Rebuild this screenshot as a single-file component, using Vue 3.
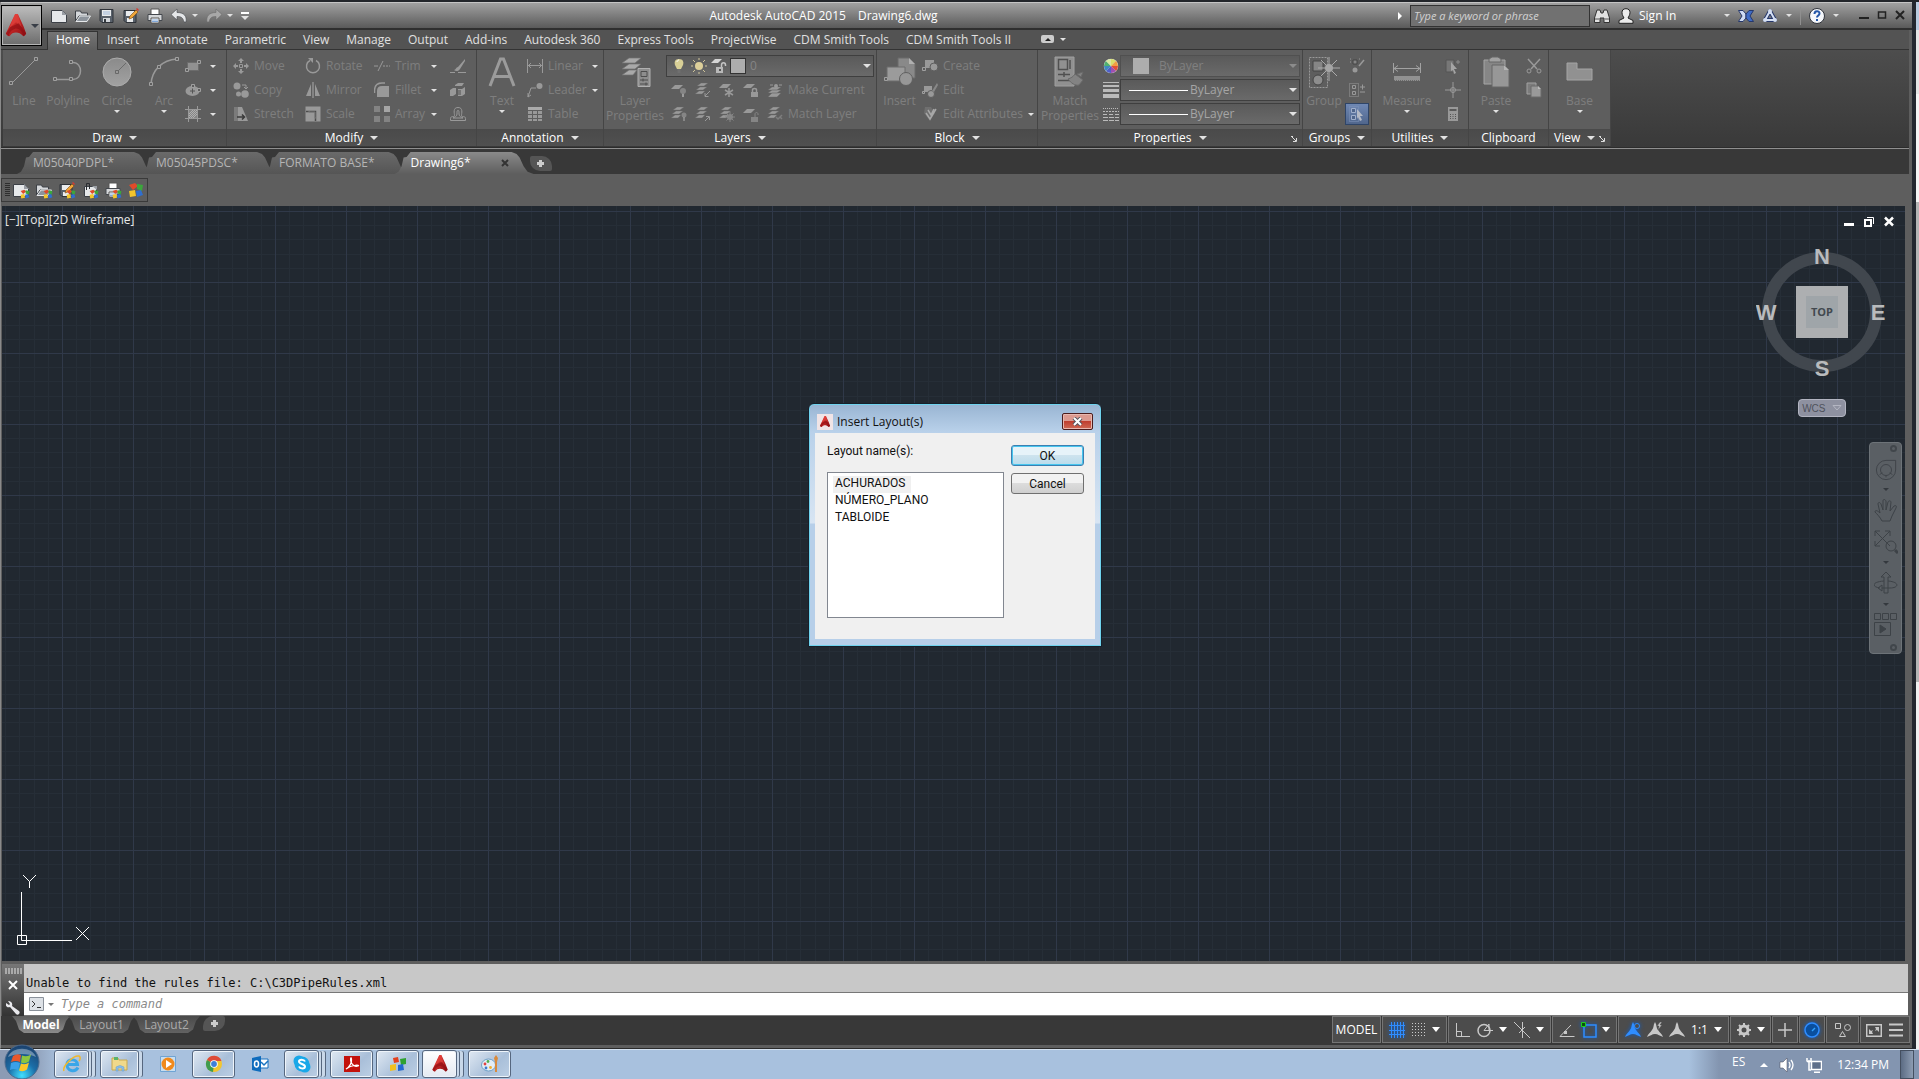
<template>
  <div class="desktop">
    <!-- icon sprite -->
    <svg class="sprite" aria-hidden="true">
      <defs>
        <linearGradient id="g-grey" x1="0" y1="0" x2="0" y2="1">
          <stop offset="0" stop-color="#8a8a8a" />
          <stop offset="1" stop-color="#a2a2a2" />
        </linearGradient>
        <linearGradient id="g-red" x1="0" y1="0" x2="1" y2="1">
          <stop offset="0" stop-color="#ef3b36" />
          <stop offset="1" stop-color="#8e0f14" />
        </linearGradient>
        <radialGradient id="g-orb" cx="0.5" cy="0.9" r="0.9">
          <stop offset="0" stop-color="#3fe0ff" />
          <stop offset="0.45" stop-color="#1b6ea8" />
          <stop offset="1" stop-color="#1b3f6b" />
        </radialGradient>
      </defs>

      <symbol id="i-acad" viewBox="0 0 24 26">
        <path d="M11 0h3l6 13 3 8c-1 2-2 3-3 3-3-3-5-4-8-4s-5 1-7 4c-2 0-3-1-4-3z" fill="url(#g-red)" />
        <path d="M11 0 5 15l7-6 6 5-4-14z" fill="#f0524a" opacity="0.45" />
        <path d="M1 21 6 14l9-4 8 11-3 3c-1-6-6-9-9-8s-6 3-7 8z" fill="#8c0d12" opacity="0.6" />
      </symbol>
      <symbol id="i-new" viewBox="0 0 16 16">
        <path d="M.5 2.500h11l4 4v8H.5z" fill="#e6e8ea" stroke="#3c4046" />
        <path d="M11 2v5h5z" fill="#9a9ea4" />
      </symbol>
      <symbol id="i-open" viewBox="0 0 16 16">
        <path d="M.5 13V3h5l1 2h6v3H4z" fill="#d4d7da" stroke="#3c4046" />
        <path d="M1 13.500 5 8h10.500L12 13.500z" fill="#8d949c" stroke="#e6e8ea" />
      </symbol>
      <symbol id="i-save" viewBox="0 0 16 16">
        <path d="M1 1.500h13v13H3l-2-2z" fill="#59616b" stroke="#2e3238" />
        <path d="M3 2h9v6H3z" fill="#e9ebed" />
        <path d="M4 4h7M4 6h7" stroke="#9fb7d6" />
        <path d="M4 10h7v4H4z" fill="#d3d6da" />
        <path d="M5 11h2v3H5z" fill="#33383e" />
      </symbol>
      <symbol id="i-saveas" viewBox="0 0 16 16">
        <path d="M1 2.500h12v12H3l-2-2z" fill="#59616b" stroke="#2e3238" />
        <path d="M3 3h8v5H3zM4 10h6v4H4z" fill="#e9ebed" />
        <path d="m6 11 1-3 6-6 2 2-6 6z" fill="#f0a63a" stroke="#7c4a12" stroke-width="0.600" />
        <path d="m13 1 2 2 1-1-2-2z" fill="#d9382e" />
      </symbol>
      <symbol id="i-print" viewBox="0 0 16 16">
        <path d="M4 1h8v6H4z" fill="#fff" stroke="#555" />
        <path d="M1 6.500h14v6H1z" fill="#d5d7d9" stroke="#44484e" />
        <path d="M4 10h8v5H4z" fill="#fff" stroke="#555" />
        <path d="M5 12h6M5 13.500h6" stroke="#7fa6d8" />
      </symbol>
      <symbol id="i-pin" viewBox="0 0 16 16">
        <path d="M2.500 4.500h12v10h-12z" fill="#e6e8ea" stroke="#3c4046" />
        <path d="M10 4h5v4z" fill="#9a9ea4" />
        <path d="M4.500 8V1.500h3V7" fill="none" stroke="#2a2d31" />
      </symbol>
      <symbol id="i-undo" viewBox="0 0 16 16">
        <path d="M6 1 0 6.500 6 12V8.500c4 0 6 1 7 5.500h2c1-6-2-9.500-9-9.500z" fill="#e4e6e8" stroke="#44484e" stroke-width="0.600" />
      </symbol>
      <symbol id="i-redo" viewBox="0 0 16 16">
        <path d="m10 1 6 5.500-6 5.500V8.500c-4 0-6 1-7 5.500H1C0 8 3 4.500 10 4.500z" fill="#a8a8a8" stroke="#6d6d6d" stroke-width="0.600" />
      </symbol>
      <symbol id="i-binoc" viewBox="0 0 16 16">
        <path d="M3 2h3l1 3h2l1-3h3l2.500 8v4.500H10V10H6v4.500H.5V10z" fill="#e1e1e1" stroke="#333" />
        <path d="M1 11h4M11 11h4" stroke="#555" />
      </symbol>
      <symbol id="i-user" viewBox="0 0 16 16">
        <path d="M8 .7c3 0 4 2 4 4S10.500 9 10 10l5 2.500v2.800H1v-2.800L6 10C5.500 9 4 7 4 4.700s1-4 4-4z" fill="#ececec" stroke="#222" />
      </symbol>
      <symbol id="i-exchange" viewBox="0 0 16 16">
        <path d="M.5 2.500H5L8 6v4l-3 3.500H.5L4 8z" fill="#cfdcf4" stroke="#26386b" />
        <path d="M15.500 2.500H11L8 6v4l3 3.500h4.500L12 8z" fill="#3f6bc4" stroke="#26386b" />
      </symbol>
      <symbol id="i-a360" viewBox="0 0 16 16">
        <path d="M8 3 3 12h10z" fill="none" stroke="#26386b" stroke-width="4" stroke-linejoin="round" />
        <path d="M8 3 3 12h10z" fill="none" stroke="#d5dff3" stroke-width="2" stroke-linejoin="round" />
        <circle cx="8" cy="3" r="2" fill="#d5dff3" /><circle cx="3" cy="12" r="2" fill="#d5dff3" />
        <circle cx="13" cy="12" r="2" fill="#d5dff3" />
      </symbol>
      <symbol id="i-help" viewBox="0 0 16 16">
        <circle cx="8" cy="8" r="7.500" fill="#f4f6fa" stroke="#30343c" />
        <path d="M5.500 6c0-3.500 5-3.500 5-.5C10.500 7.500 8 7.500 8 9.500M8 11v2" fill="none" stroke="#2456a8" stroke-width="2" />
      </symbol>

      <symbol id="i-line" viewBox="0 0 32 32">
        <path d="M4 27 27 4" stroke="#999" fill="none" />
        <path d="M1.500 25.500h3v3h-3zM26.500 1.500h3v3h-3z" fill="#5e5e5e" stroke="#a0a0a0" />
      </symbol>
      <symbol id="i-polyline" viewBox="0 0 32 32">
        <path d="M3 23.500h18c10 0 10-17 0-17" stroke="#999" fill="none" stroke-width="1.500" />
        <path d="M1.500 21.500h3v3h-3zM17.500 21.500h3v3h-3zM17.500 4.500h3v3h-3z" fill="#5e5e5e" stroke="#a0a0a0" />
      </symbol>
      <symbol id="i-circle" viewBox="0 0 32 32">
        <circle cx="16" cy="16" r="14" fill="url(#g-grey)" stroke="#acacac" />
        <path d="m16 16 9-9" stroke="#6a6a6a" /><path d="M14.500 14.500h3v3h-3z" fill="#999" stroke="#686868" />
      </symbol>
      <symbol id="i-arc" viewBox="0 0 32 32">
        <path d="M3 28C4 14 14 4 29 3" stroke="#999" fill="none" stroke-width="1.500" />
        <path d="M1.500 26.500h3v3h-3zM9.500 9.500h3v3h-3zM27.500 1.500h3v3h-3z" fill="#5e5e5e" stroke="#a0a0a0" />
      </symbol>
      <symbol id="i-rect" viewBox="0 0 16 16">
        <path d="M2.500 4.500h11v8h-11z" fill="#919191" stroke="#6c6c6c" />
        <path d="M.5 10.500h3v3h-3zM12.500 2.500h3v3h-3z" fill="#5e5e5e" stroke="#a0a0a0" />
      </symbol>
      <symbol id="i-ellipse" viewBox="0 0 16 16">
        <ellipse cx="7.500" cy="9" rx="7" ry="5" fill="#999" /><path d="M5 9h5M7.500 6.500v5" stroke="#555" />
        <path d="M6.500 2.500h3v3h-3zM12.500 6.500h3v3h-3z" fill="#5e5e5e" stroke="#a0a0a0" />
      </symbol>
      <symbol id="i-hatch" viewBox="0 0 16 16">
        <path d="M4 4h8v8H4z" fill="#858585" />
        <path d="M3.500 0v16M12.500 0v16M0 3.500h16M0 12.500h16" stroke="#9a9a9a" />
        <path d="m4 8 4-4M4 12l8-8M8 12l4-4M4 10l6-6M6 12l6-6" stroke="#b0b0b0" />
      </symbol>
      <symbol id="i-move" viewBox="0 0 16 16">
        <path d="M8 0 5 3h2v2h2V3h2zM8 16l-3-3h2v-2h2v2h2zM0 8l3-3v2h2v2H3v2zM16 8l-3-3v2h-2v2h2v2z" />
        <path d="M6.500 6.500h3v3h-3z" fill="none" stroke="currentColor" />
      </symbol>
      <symbol id="i-copy" viewBox="0 0 16 16">
        <circle cx="4" cy="4" r="3.500" /><circle cx="5.500" cy="12" r="2.500" /><circle cx="12" cy="12" r="3.800" />
        <path d="M9 3h4v3M11 5l2 2 2-2" fill="none" stroke="currentColor" />
      </symbol>
      <symbol id="i-stretch" viewBox="0 0 16 16">
        <path d="M1 1h8l6 14H1z" /><path d="M1 1h4v14H1z" fill="#7b7b7b" />
        <path d="M4 11h7M9 8.500l2.500 2.500L9 13.500" fill="none" stroke="#3b3b3b" stroke-width="1.500" />
      </symbol>
      <symbol id="i-rotate" viewBox="0 0 16 16">
        <path d="M5 2.500a6.500 6.500 0 1 0 6 0" fill="none" stroke="currentColor" stroke-width="1.500" /><path d="M3 0h5v5z" />
      </symbol>
      <symbol id="i-mirror" viewBox="0 0 16 16">
        <path d="M6 2v12H1zM10 2v12h5z" /><path d="M8 0v16" stroke="#aaa" />
      </symbol>
      <symbol id="i-scale" viewBox="0 0 16 16">
        <path d="M.5.5h15v15H.5z" /><path d="M1 5.500h9.500V15" fill="none" stroke="#4c4c4c" stroke-width="1.500" />
        <path d="M4 5v1h6v6h1" fill="none" stroke="#777" />
      </symbol>
      <symbol id="i-trim" viewBox="0 0 16 16">
        <path d="M0 8h4M4 13l5-10M9 8h2M12 8h2M15 8h1" stroke="currentColor" fill="none" />
      </symbol>
      <symbol id="i-fillet" viewBox="0 0 16 16">
        <path d="M3 15V9q0-5 5-5h7v11z" /><path d="M.5 11V8Q1 1 8 1h3" fill="none" stroke="currentColor" stroke-width="1.500" />
      </symbol>
      <symbol id="i-array" viewBox="0 0 16 16">
        <path d="M0 0h6v6H0zM0 10h6v6H0zM10 10h6v6h-6z" fill="#838383" /><path d="M10 0h6v6h-6z" fill="#a5a5a5" />
      </symbol>
      <symbol id="i-erase" viewBox="0 0 16 16">
        <path d="M15 1 8 9l2 2 5-8zM8 9c-2 0-2 3-4 3 2 2 5 1 6-1z" /><path d="M0 14.500h5M8 14.500h8" stroke="currentColor" />
      </symbol>
      <symbol id="i-explode" viewBox="0 0 16 16">
        <path d="m5 3 3-2h6l-2 3H5zM0 8l3-2h3v6l-3 2H0zM8 7h4l3-2v7l-3 2H8z" /><path d="M8 8h3v5H8z" fill="#747474" />
      </symbol>
      <symbol id="i-offset" viewBox="0 0 16 16">
        <path d="M.5 14.500h15v-2c0-3-4-1-4-3s2-8-3.500-8-3.500 6-3.500 8-4 0-4 3z" fill="none" stroke="currentColor" />
        <path d="M3 12h10c-1-1-4-1-4-4s0-3.500-1-3.500S7 5 7 8s-3 3-4 4z" fill="none" stroke="currentColor" />
      </symbol>
      <symbol id="i-text" viewBox="0 0 32 32">
        <path d="M4 30 14.500 3h3L28 30M8.500 20.500h15" fill="none" stroke="#9b9b9b" stroke-width="3" />
      </symbol>
      <symbol id="i-linear" viewBox="0 0 16 16">
        <path d="M.5 1v14M15.500 1v14M1 7.500h14M4 5 1.500 7.500 4 10M12 5l2.500 2.500L12 10" fill="none" stroke="currentColor" />
      </symbol>
      <symbol id="i-leader" viewBox="0 0 16 16">
        <path d="M1 15 4 6h5M1 11v4l3-2" fill="none" stroke="currentColor" /><circle cx="12.500" cy="4" r="3" />
      </symbol>
      <symbol id="i-table" viewBox="0 0 16 16">
        <path d="M1 1h14v3H1z" fill="#aaa" /><path d="M1 5h4v3H1zM6 5h4v3H6zM11 5h4v3h-4zM1 9h4v3H1zM6 9h4v3H6zM11 9h4v3h-4zM1 13h4v2H1zM6 13h4v2H6zM11 13h4v2h-4z" />
      </symbol>
      <symbol id="i-layerprops" viewBox="0 0 32 32">
        <path d="M10 2h12l-6 5H3zM10 8h12l-6 5H3zM10 14h8l-4 5H3z" fill="#a9a9a9" stroke="#707070" stroke-width="0.700" />
        <path d="M19 12.500h12v18H19z" fill="#8d8d8d" stroke="#b0b0b0" />
        <path d="M22 15.500h6v5h-6zM21 24h8M21 28h8M24 22.500v3M27 26.500v3" fill="none" stroke="#4d4d4d" />
      </symbol>
      <symbol id="i-bulb" viewBox="0 0 16 16">
        <path d="M8 1c4 0 5 3 4 6l-2 4H6L4 7C3 4 4 1 8 1z" fill="#d8cf96" /><path d="M6.500 11h3v4h-3z" fill="#6f6f6f" />
        <path d="M6 4c0-1 1-2 2-2" stroke="#fff" fill="none" />
      </symbol>
      <symbol id="i-sun" viewBox="0 0 16 16">
        <circle cx="8" cy="8" r="4" fill="#ddcf9a" />
        <path d="M8 0v2M8 14v2M0 8h2M14 8h2M2 2l2 2M12 12l2 2M14 2l-2 2M4 12l-2 2" stroke="#cfc49a" />
      </symbol>
      <symbol id="i-layunlock" viewBox="0 0 16 16">
        <path d="M4 1h7L7 5H0z" fill="#d5d5d5" /><path d="M5 9h7v6H5z" fill="#b9b9b9" />
        <path d="M10.500 9V7c0-3 4-3 4 0v1" fill="none" stroke="#c5c5c5" stroke-width="1.500" /><path d="M8 11h2v2H8z" fill="#555" />
      </symbol>
      <symbol id="i-lay1" viewBox="0 0 16 16">
        <path d="M4 3h8L8 7H0z" /><path d="M12 11v4" stroke="#b0b0b0" stroke-width="1.500" /><circle cx="12" cy="9" r="3" fill="#858585" />
      </symbol>
      <symbol id="i-lays" viewBox="0 0 16 16">
        <path d="M6 1h7L9 4H2zM5 5h7L8 8H1zM4 9h6l-3 3H0z" stroke="#666" stroke-width="0.400" />
      </symbol>
      <symbol id="i-lay2" viewBox="0 0 16 16">
        <use href="#i-lays" /><path d="m15 9-5 5M10 11v3.500h3.500" fill="none" stroke="currentColor" />
      </symbol>
      <symbol id="i-lay3" viewBox="0 0 16 16">
        <path d="M4 2h8L8 6H0z" /><path d="M10 6v9M6 8l8 5M14 8l-8 5" stroke="currentColor" stroke-width="1.500" />
      </symbol>
      <symbol id="i-lay4" viewBox="0 0 16 16">
        <path d="M4 2h8L8 6H0z" /><path d="M8 10h7v5H8z" /><path d="M9.500 10V8c0-2 4-2 4 0v2" fill="none" stroke="currentColor" stroke-width="1.500" />
      </symbol>
      <symbol id="i-lay5" viewBox="0 0 16 16">
        <path d="M5 5h9l-4 3H1zM5 8h9l-4 3H1zM5 11h9l-4 4H1z" stroke="#666" stroke-width="0.400" /><circle cx="9" cy="4" r="2" /><path d="M3 3h3M12 3h3" stroke="currentColor" />
      </symbol>
      <symbol id="i-lay6" viewBox="0 0 16 16">
        <use href="#i-lays" /><circle cx="13" cy="9" r="2.500" fill="#858585" /><path d="M13 11v4" stroke="#b0b0b0" />
      </symbol>
      <symbol id="i-lay7" viewBox="0 0 16 16">
        <use href="#i-lays" /><path d="m10 15 4-4M11 10.500h3.500V14" fill="none" stroke="currentColor" />
      </symbol>
      <symbol id="i-lay8" viewBox="0 0 16 16">
        <use href="#i-lays" /><circle cx="11" cy="11" r="3" fill="#858585" />
        <path d="M11 6v10M6 11h10M7.500 7.500l7 7M14.500 7.500l-7 7" stroke="#858585" />
      </symbol>
      <symbol id="i-lay9" viewBox="0 0 16 16">
        <path d="M4 3h8L8 7H0z" /><path d="M8 11h7v5H8z" fill="#858585" /><path d="M12 11V8c0-2 3-2 3 0v1" fill="none" stroke="#858585" />
      </symbol>
      <symbol id="i-lay10" viewBox="0 0 16 16">
        <use href="#i-lays" /><path d="m9 11 2 2 4-4M13 11l2 2" fill="none" stroke="#7d7d7d" stroke-width="1.500" />
      </symbol>
      <symbol id="i-insert" viewBox="0 0 32 32">
        <path d="M14 2h11l6 6v14H14z" fill="#898989" stroke="#6a6a6a" /><path d="M25 2v6h6z" fill="#b0b0b0" />
        <path d="M3 11h18v14H3z" fill="#9b9b9b" stroke="#6c6c6c" /><circle cx="22" cy="23" r="6.500" fill="#979797" stroke="#606060" />
        <path d="M.5 21.500h3v3h-3z" fill="#5e5e5e" stroke="#a0a0a0" />
      </symbol>
      <symbol id="i-bcreate" viewBox="0 0 16 16">
        <path d="M3 2h9v8H3z" /><circle cx="12" cy="9" r="4" stroke="#5e5e5e" /><path d="M.5 9.500h3v3h-3z" fill="#5e5e5e" stroke="#a0a0a0" />
      </symbol>
      <symbol id="i-bedit" viewBox="0 0 16 16">
        <path d="M2 4h8v6H2z" /><circle cx="9" cy="12" r="3.500" stroke="#5e5e5e" /><path d="m10 9 5-8 1 2-4 7z" fill="#888" />
        <path d="M.5 9.500h2v2h-2z" fill="#5e5e5e" stroke="#a0a0a0" />
      </symbol>
      <symbol id="i-battr" viewBox="0 0 16 16">
        <path d="M3 1h6l4 6-5 8-6-8z" fill="#6f6f6f" /><path d="m4 7 4 6 6-10M6 4l3 5 3-6" fill="none" stroke="#a7a7a7" stroke-width="1.500" />
      </symbol>
      <symbol id="i-match" viewBox="0 0 32 32">
        <path d="M1 1h19v29H1z" fill="#909090" stroke="#9f9f9f" /><path d="M4.500 3.500h9v10h-9zM16 4v9M4 18.500h12M4 24.500h12M10 16v5" fill="none" stroke="#505050" stroke-width="1.500" />
        <path d="M14 23c3 4 7 7 11 6l4-5-8-6c-2 3-4 4-7 5zM23 18l6-2-2 5z" fill="#838383" stroke="#6a6a6a" />
      </symbol>
      <symbol id="i-wheel" viewBox="0 0 16 16">
        <circle cx="8" cy="8" r="7.700" fill="#ddd" stroke="#333" stroke-width="0.600" />
        <path d="M8 8V1a7 7 0 0 1 5 2z" fill="#d8e06a" /><path d="m8 8 5-5a7 7 0 0 1 2 5z" fill="#f0a040" /><path d="M8 8h7a7 7 0 0 1-2 5z" fill="#e05038" />
        <path d="m8 8 5 5a7 7 0 0 1-5 2z" fill="#a050b0" /><path d="M8 8v7a7 7 0 0 1-5-2z" fill="#5060c8" /><path d="m8 8-5 5a7 7 0 0 1-2-5z" fill="#4088c0" />
        <path d="M8 8H1a7 7 0 0 1 2-5z" fill="#50b070" /><path d="M8 8 3 3a7 7 0 0 1 5-2z" fill="#d8e8a0" />
      </symbol>
      <symbol id="i-weight" viewBox="0 0 16 16"><path d="M0 0h16v1H0zM0 3h16v2H0zM0 7h16v3H0zM0 12h16v4H0z" fill="#bababa" /></symbol>
      <symbol id="i-ltype" viewBox="0 0 16 16">
        <path d="M0 2.500h16" stroke="#bababa" stroke-dasharray="1 1" /><path d="M0 5.500h16" stroke="#bababa" stroke-dasharray="2 1" />
        <path d="M0 8.500h16" stroke="#bababa" stroke-dasharray="4 2" /><path d="M0 11.500h16M0 14.500h16" stroke="#bababa" stroke-dasharray="5 1" />
      </symbol>
      <symbol id="i-group" viewBox="0 0 32 32">
        <path d="M1.500 1.500h18v30h-18z" fill="none" stroke="#999" stroke-dasharray="2 1" /><path d="M5 5h10v10H5z" fill="#858585" stroke="#454545" />
        <circle cx="10" cy="24" r="5" fill="#8d8d8d" stroke="#454545" />
        <path d="M21 1v24M10 12h22M13 4l16 16M29 4 13 20" stroke="#aaa" /><circle cx="21" cy="12" r="4" fill="#a5a5a5" />
      </symbol>
      <symbol id="i-ungroup" viewBox="0 0 16 16">
        <path d="M4 2h4v4H4z" fill="#858585" stroke="#444" /><circle cx="6" cy="12" r="2.500" /><path d="m10 8 5-6" stroke="currentColor" stroke-width="1.500" /><path d="M1 1h1M1 4h1M10 1h1" stroke="currentColor" />
      </symbol>
      <symbol id="i-gedit" viewBox="0 0 16 16">
        <path d="M.5 1.500h9v13h-9z" fill="none" stroke="currentColor" stroke-dasharray="1 1" /><path d="M3.500 3.500h3v3h-3zM3.500 9.500h3v3h-3z" fill="none" stroke="currentColor" />
        <path d="M11 5h5M13.500 2.500v5M11 10h5" stroke="currentColor" />
      </symbol>
      <symbol id="i-gsel" viewBox="0 0 16 16">
        <path d="M2.500 2.500h4v4h-4zM2.500 9.500h4v4h-4z" fill="#50668c" stroke="#a0b0cc" /><path d="M.5.500h9v15h-9z" fill="none" stroke="#8094b8" stroke-dasharray="1 1" />
        <path d="m8 3 6 7h-3l2 4-2 1-2-4-1 2z" fill="#b4bac6" />
      </symbol>
      <symbol id="i-measure" viewBox="0 0 32 32">
        <path d="M2.500 7v10M29.500 7v10M3 12.500h26M7 9.500l-4 3 4 3M25 9.500l4 3-4 3" fill="none" stroke="#a2a2a2" /><path d="M3 20h26v5H3z" fill="#919191" />
        <path d="M3 24.500h26" stroke="#6a6a6a" stroke-dasharray="1 1" />
      </symbol>
      <symbol id="i-qsel" viewBox="0 0 16 16">
        <path d="M1 2h8v12H1z" fill="#777" stroke="#555" /><path d="m6 4 6 7H9l2 4-2 1-1-4-2 1z" fill="#a5a5a5" /><path d="M13 2v4M11 4h4" stroke="#8a8a8a" />
      </symbol>
      <symbol id="i-idpoint" viewBox="0 0 16 16"><path d="M8 0v16M0 8h16" stroke="currentColor" /><circle cx="8" cy="8" r="2.500" fill="none" stroke="currentColor" /></symbol>
      <symbol id="i-calc" viewBox="0 0 16 16"><path d="M3 1h10v14H3z" /><path d="M4.500 3h7v2h-7z" fill="#5a5a5a" /><path d="M5 8.500h6M5 10.500h6M5 12.500h6" stroke="#555" stroke-dasharray="1 1.500" /></symbol>
      <symbol id="i-paste" viewBox="0 0 32 32">
        <path d="M4 4h21v24H4z" fill="#868686" stroke="#a5a5a5" /><path d="M9 6V3l3-2h6l3 2v3z" fill="#a2a2a2" stroke="#666" />
        <path d="M12 9h12l5 5v17H12z" fill="#979797" stroke="#666" /><path d="M24 9v5h5z" fill="#b4b4b4" />
      </symbol>
      <symbol id="i-cut" viewBox="0 0 16 16">
        <path d="m2 1 9 10M14 1 5 11" stroke="currentColor" stroke-width="1.500" /><circle cx="3" cy="13" r="2" fill="none" stroke="currentColor" /><circle cx="13" cy="13" r="2" fill="none" stroke="currentColor" />
      </symbol>
      <symbol id="i-copyclip" viewBox="0 0 16 16"><path d="M1 1h9v11H1z" fill="#7c7c7c" stroke="#a2a2a2" /><path d="M5 4h7l3 3v8H5z" stroke="#6a6a6a" /><path d="M12 4v3h3z" fill="#bbb" /></symbol>
      <symbol id="i-base" viewBox="0 0 32 32"><path d="M3 7h10v6h15v11H3z" fill="#919191" stroke="#a5a5a5" /></symbol>

      <symbol id="i-cube" viewBox="0 0 16 16">
        <path d="m1 3 6-2 3 3-5 4z" fill="#e04a2a" /><path d="m9 2 6 1-1 6-5-2z" fill="#3ca63c" /><path d="m1 9 6-1 1 6-6 1z" fill="#f3c52c" /><path d="m8 9 5-1 2 5-6 2z" fill="#2f6fd0" />
      </symbol>
      <symbol id="i-steer" viewBox="0 0 24 24">
        <path d="M12 1.500h10.500V12A10.500 10.500 0 1 1 12 1.500z" /><circle cx="12" cy="12" r="6" /><path d="M5 17l3-2M19 17l-3-2M12 18v2" />
      </symbol>
      <symbol id="i-pan" viewBox="0 0 24 24">
        <path d="M8 22c-2-4-5-7-7-9 0-2 2-2 5 1L4 5c0-2 2-2 3 0l2 6V2c0-2 2-2 3 0v9l2-8c1-2 3-1 3 0l-1 9 4-5c2-1 3 0 2 2l-4 8-2 5z" />
      </symbol>
      <symbol id="i-zoomx" viewBox="0 0 24 24">
        <path d="m1 1 15 15M1 16 16 1M1 6V1h5M11 1h5v5M1 11v5h5" /><circle cx="17" cy="16" r="5" /><path d="m21 20 3 3" stroke-width="3" />
      </symbol>
      <symbol id="i-orbit" viewBox="0 0 24 24">
        <path d="M10 22V6H7l5-5 5 5h-3v16zM10 10C-3 11-2 16 6 17M14 10c12 1 11 7 2 7H8M8 14l-4 3 4 3z" />
      </symbol>
      <symbol id="i-motion" viewBox="0 0 24 24">
        <path d="M.5.5h6v6h-6zM8.500.5h6v6h-6zM16.500.5h6v6h-6zM.5 9.500h16v13H.5z" /><path d="m6 12 6 4-6 4z" fill="currentColor" />
      </symbol>
      <symbol id="i-wrench" viewBox="0 0 14 14">
        <path d="M2 0 4 3 3 4 0 2c-1 3 1 5 4 4l6 7c2 2 5-1 3-3L6 5c1-3-1-5-4-5z" fill="#e8e8ec" />
      </symbol>

      <symbol id="i-sgrid" viewBox="0 0 16 16"><path d="M2.500 0v16M5.500 0v16M8.500 0v16M11.500 0v16M0 3.500h16M0 8.500h16M0 12.500h16" stroke="#2f8dff" /><path d="M14.500 0v16" stroke="#2f8dff" /></symbol>
      <symbol id="i-ssnap" viewBox="0 0 16 16">
        <path d="M1 1.500h14M1 4.500h14M1 7.500h14M1 10.500h14M1 13.500h14" stroke="#ccc" stroke-dasharray="1 2" />
      </symbol>
      <symbol id="i-sortho" viewBox="0 0 16 16"><path d="M1.500 1v13.500H15M1.500 9.500h5v5" fill="none" stroke="#c8c8c8" /></symbol>
      <symbol id="i-spolar" viewBox="0 0 16 16"><circle cx="7" cy="8.500" r="6" fill="none" stroke="#c8c8c8" stroke-width="1.500" /><path d="M7 8.500h9M7 8.500 12 2v6" fill="none" stroke="#c8c8c8" /></symbol>
      <symbol id="i-siso" viewBox="0 0 16 16"><path d="m0 0 16 16M8.500 0v16M5 11l6-6" stroke="#c8c8c8" fill="none" /></symbol>
      <symbol id="i-strack" viewBox="0 0 16 16"><path d="M15.500 14.500H1L12 3" fill="none" stroke="#c8c8c8" /><path d="M5 9h3v3H5z" fill="#c8c8c8" /></symbol>
      <symbol id="i-sosnap" viewBox="0 0 16 16"><path d="M3 3h12v12H3z" fill="none" stroke="#2f8dff" stroke-width="1.500" /><path d="M.5.5h4v4h-4z" fill="#0d4f0d" stroke="#1fd01f" /></symbol>
      <symbol id="i-ann" viewBox="0 0 16 16"><path d="M8 0c2 3 1 6 3 8 2 3 4 4 5 7-3-1-5-3-8-3s-5 2-8 3c1-3 3-4 5-7 2-2 1-5 3-8z" /></symbol>
      <symbol id="i-annv" viewBox="0 0 16 16"><use href="#i-ann" /><circle cx="12" cy="4" r="2.500" fill="#4c4c4c" stroke="currentColor" /></symbol>
      <symbol id="i-anna" viewBox="0 0 16 16"><use href="#i-ann" /><path d="m13 0-3 4h2l-1 4 4-5h-2l2-3z" stroke="#4c4c4c" stroke-width="0.500" /></symbol>
      <symbol id="i-gear" viewBox="0 0 16 16"><circle cx="8" cy="8" r="4" fill="none" stroke="#c8c8c8" stroke-width="3" /><path d="M8 1v3M8 12v3M1 8h3M12 8h3M3 3l2 2M11 11l2 2M13 3l-2 2M5 11l-2 2" stroke="#c8c8c8" stroke-width="2" /></symbol>
      <symbol id="i-plus" viewBox="0 0 16 16"><path d="M8 1v14M1 8h14" stroke="#c8c8c8" stroke-width="1.500" /></symbol>
      <symbol id="i-perf" viewBox="0 0 16 16"><circle cx="8" cy="8" r="7" fill="#0a4f9e" stroke="#2f8dff" stroke-width="1.500" /><path d="m8 9 3-3" stroke="#2fa0ff" stroke-width="1.500" /></symbol>
      <symbol id="i-iso" viewBox="0 0 16 16"><path d="M.5 1.500h5v5h-5zM7.500 9.500l3 5h-6z" fill="none" stroke="#c8c8c8" /><circle cx="12.500" cy="5.500" r="3" fill="none" stroke="#c8c8c8" /></symbol>
      <symbol id="i-full" viewBox="0 0 16 16"><path d="M.7 2.700h14.600v11.600H.7z" fill="none" stroke="#c8c8c8" stroke-width="1.500" /><path d="M3 12V7l2 2 2-1-1 2 1 2zM13 5v5l-2-2-2 1 1-2-1-2z" fill="#c8c8c8" /></symbol>
      <symbol id="i-burger" viewBox="0 0 16 16"><path d="M1 2.500h14M1 8h14M1 13.500h14" stroke="#c8c8c8" stroke-width="2" /></symbol>

      <symbol id="i-orb" viewBox="0 0 36 36">
        <circle cx="18" cy="18" r="17" fill="url(#g-orb)" stroke="#4b6a8e" />
        <path d="M9 12q4-3 8-1l-1 7q-4-2-9 0z" fill="#e8572a" /><path d="M18 11.500q5 2 9-1l-2 7q-4 3-8 1z" fill="#8cc63f" />
        <path d="M7 19q5-2 9 0l-2 7q-4-2-8 0z" fill="#3aa0e8" /><path d="M17 19.500q4 2 8-1l-2 7q-4 3-8 1z" fill="#fcc728" />
        <path d="M4 13C8 2 28 2 32 13 24 9 12 9 4 13z" fill="#fff" opacity="0.350" />
      </symbol>
      <symbol id="i-ie" viewBox="0 0 18 18">
        <path d="M15 12.500C12 18 4 16 4 9.500S14 3 14.500 9.500H5" fill="none" stroke="#3aa6e8" stroke-width="3" /><path d="M1 16C-1 12 10 0 16 1c2 1 1 4 0 5" fill="none" stroke="#f0b82c" stroke-width="1.500" />
      </symbol>
      <symbol id="i-folder" viewBox="0 0 18 18">
        <path d="M1 3h6l1 2h8v10H1z" fill="#f0d98a" stroke="#c9a94c" /><path d="M3 2h4v3H3z" fill="#5bb36a" /><path d="M5 16v-4q4-3 8 0v4h-2v-3H7v3z" fill="#8fc0e6" stroke="#5f9bd0" stroke-width="0.500" />
      </symbol>
      <symbol id="i-wmp" viewBox="0 0 18 18"><path d="M1.500 1.500h15v15h-15z" fill="#c9def0" stroke="#6fa4d4" /><circle cx="9" cy="9" r="6.500" fill="#f08a1c" /><path d="m7 5 6 4-6 4z" fill="#fff" /></symbol>
      <symbol id="i-chrome" viewBox="0 0 18 18">
        <circle cx="9" cy="9" r="8" fill="#f2c530" /><path d="M9 9 2 5a8 8 0 0 1 14.500 1H9z" fill="#dd4b39" /><path d="M9 9 2 5a8 8 0 0 0 6 12z" fill="#3f9c50" />
        <circle cx="9" cy="9" r="3.800" fill="#fff" /><circle cx="9" cy="9" r="2.900" fill="#3f7fd8" />
      </symbol>
      <symbol id="i-outlook" viewBox="0 0 18 18"><path d="M8 4h9v9H8z" fill="#fff" stroke="#1a73c0" /><path d="m10 7 3 3 4-4" fill="none" stroke="#1a73c0" stroke-width="1.500" /><path d="m1 3 9-2v16l-9-2z" fill="#0f6cbd" /><ellipse cx="5.500" cy="9" rx="2" ry="3" fill="none" stroke="#fff" stroke-width="1.500" /></symbol>
      <symbol id="i-skype" viewBox="0 0 18 18"><circle cx="6" cy="6" r="5.500" fill="#1aa8e8" /><circle cx="12" cy="12" r="5.500" fill="#1aa8e8" /><circle cx="9" cy="9" r="7.500" fill="#1aa8e8" /><path d="M12 6.500C11 4 6 4 6 6.500S12 9 12 11.500 7 14 6 11.500" fill="none" stroke="#fff" stroke-width="2" /></symbol>
      <symbol id="i-acrobat" viewBox="0 0 18 18"><path d="M1 1h16v16H1z" fill="#c3110c" /><path d="M3 14C7 12 9 7 8.500 4S7 4 8 7s4 5 7 4-6-2-12 3z" fill="none" stroke="#fff" stroke-width="1.200" /></symbol>
      <symbol id="i-cubes" viewBox="0 0 18 14">
        <path d="m4 1 5-1 1 5-5 1z" fill="#e2401e" /><path d="m11 2 6-1v6l-5 1z" fill="#2fa12f" /><path d="m1 8 6-1v6l-6 1z" fill="#f0c020" /><path d="m9 8 5-1 1 6-6 1z" fill="#2468d0" />
      </symbol>
      <symbol id="i-paint" viewBox="0 0 18 18"><ellipse cx="7.500" cy="10" rx="7" ry="6" fill="#e3edf5" stroke="#6fa0c8" /><circle cx="4" cy="9" r="1.400" fill="#e04040" /><circle cx="7" cy="6.500" r="1.400" fill="#50b050" /><circle cx="5" cy="13" r="1.400" fill="#3c7ad0" /><circle cx="9.500" cy="12.500" r="1.400" fill="#f0b030" /><path d="M14 17V7l-1-4 2-3 2 3-1 4v10z" fill="#d98a3c" /></symbol>
      <symbol id="i-speaker" viewBox="0 0 16 16"><path d="M1 5h3l4-4v14l-4-4H1z" fill="#fff" stroke="#445" stroke-width="0.500" /><path d="M10 5q2 3 0 6M12 3q4 5 0 10" fill="none" stroke="#fff" stroke-width="1.300" /></symbol>
      <symbol id="i-net" viewBox="0 0 16 16"><path d="M5.500 4.500h10v8h-10z" fill="#5e6f8a" stroke="#fff" stroke-width="1.500" /><path d="M8 15.300h6M3 6v7h2M1 1v3q2 2 4 0V1M3 3v3" fill="none" stroke="#fff" stroke-width="1.500" /></symbol>
    </svg>

    <div class="screen">
      <div class="app">
        <button class="app-btn" aria-label="Application menu">
          <Ic n="acad" :s="24" /><i class="arr wide dark"></i>
        </button>

        <header class="titlebar">
          <div class="qat">
            <button v-for="q in quick" :key="q" :aria-label="q"><Ic :n="q" /></button>
            <button aria-label="Undo"><Ic n="undo" /></button>
            <i class="arr"></i>
            <button aria-label="Redo"><Ic n="redo" /></button>
            <i class="arr"></i>
            <i class="arr wide bar"></i>
          </div>
          <h1 class="caption"><span>Autodesk AutoCAD 2015</span><span>Drawing6.dwg</span></h1>
          <div class="info">
            <i class="arr-right"></i>
            <input class="search" type="text" aria-label="Search" placeholder="Type a keyword or phrase" />
            <button aria-label="Find"><Ic n="binoc" /></button>
            <button class="signin"><Ic n="user" />Sign In<i class="arr"></i></button>
            <button aria-label="Exchange"><Ic n="exchange" /></button>
            <button aria-label="Autodesk 360"><Ic n="a360" /></button>
            <i class="arr"></i>
            <i class="rule"></i>
            <button aria-label="Help"><Ic n="help" /></button>
            <i class="arr"></i>
          </div>
          <div class="winctl">
            <button aria-label="Minimize"><svg width="10" height="10"><path d="M0 7h10v2H0z" fill="#222" /></svg></button>
            <button aria-label="Maximize"><svg width="10" height="10"><path d="M1.500 2h7v6h-7z" fill="none" stroke="#222" stroke-width="1.500" /></svg></button>
            <button aria-label="Close"><svg width="10" height="10"><path d="m1 1 8 8M9 1 1 9" stroke="#222" stroke-width="2" /></svg></button>
          </div>
        </header>

        <nav class="tabs">
          <a v-for="t in tabs" :key="t" href="#" :class="{ on: t === 'Home' }">{{ t }}</a>
          <button class="collapse" aria-label="Minimize ribbon"><i></i></button>
          <i class="arr"></i>
        </nav>

        <div class="ribbon">
          <section class="panel draw">
            <div class="body">
              <button v-for="b in drawBig" :key="b.t" class="big">
                <Ic :n="b.n" :s="32" /><span>{{ b.t }}</span><i v-if="b.a" class="arr"></i>
              </button>
              <div class="col">
                <button v-for="n in ['rect', 'ellipse', 'hatch']" :key="n" class="sm" :aria-label="n">
                  <Ic :n="n" /><i class="arr"></i>
                </button>
              </div>
            </div>
            <footer>Draw<i class="arr wide"></i></footer>
          </section>

          <section class="panel modify">
            <div class="body">
              <div v-for="(c, i) in modify" :key="i" class="col">
                <button v-for="b in c" :key="b.n" class="sm" :aria-label="b.n">
                  <Ic :n="b.n" /><span v-if="b.t">{{ b.t }}</span><i v-if="b.a" class="arr"></i>
                </button>
              </div>
            </div>
            <footer>Modify<i class="arr wide"></i></footer>
          </section>

          <section class="panel annot">
            <div class="body">
              <button class="big"><Ic n="text" :s="32" /><span>Text</span><i class="arr"></i></button>
              <div class="col">
                <button class="sm"><Ic n="linear" /><span>Linear</span><i class="arr"></i></button>
                <button class="sm"><Ic n="leader" /><span>Leader</span><i class="arr"></i></button>
                <button class="sm"><Ic n="table" /><span>Table</span></button>
              </div>
            </div>
            <footer>Annotation<i class="arr wide"></i></footer>
          </section>

          <section class="panel layers">
            <div class="body">
              <button class="big"><Ic n="layerprops" :s="32" /><span>Layer<br />Properties</span></button>
              <div class="col">
                <div class="combo layer-combo">
                  <Ic n="bulb" /><Ic n="sun" /><Ic n="layunlock" /><i class="swatch edge"></i>
                  <select aria-label="Layer"><option>0</option></select><i class="arr wide"></i>
                </div>
                <div class="icons">
                  <button v-for="k in [1, 2, 3, 4]" :key="k" :aria-label="'Layer tool ' + k"><Ic :n="'lay' + k" /></button>
                  <button class="lab"><Ic n="lay5" />Make Current</button>
                </div>
                <div class="icons">
                  <button v-for="k in [6, 7, 8, 9]" :key="k" :aria-label="'Layer tool ' + k"><Ic :n="'lay' + k" /></button>
                  <button class="lab"><Ic n="lay10" />Match Layer</button>
                </div>
              </div>
            </div>
            <footer>Layers<i class="arr wide"></i></footer>
          </section>

          <section class="panel block">
            <div class="body">
              <button class="big"><Ic n="insert" :s="32" /><span>Insert</span></button>
              <div class="col">
                <button class="sm"><Ic n="bcreate" /><span>Create</span></button>
                <button class="sm"><Ic n="bedit" /><span>Edit</span></button>
                <button class="sm"><Ic n="battr" /><span>Edit Attributes</span><i class="arr"></i></button>
              </div>
            </div>
            <footer>Block<i class="arr wide"></i></footer>
          </section>

          <section class="panel props">
            <div class="body">
              <button class="big"><Ic n="match" :s="32" /><span>Match<br />Properties</span></button>
              <div class="col mid"><Ic n="wheel" /><Ic n="weight" /><Ic n="ltype" /></div>
              <div class="col">
                <div class="combo off">
                  <i class="swatch"></i><select aria-label="Color"><option>ByLayer</option></select><i class="arr wide"></i>
                </div>
                <div v-for="l in ['Lineweight', 'Linetype']" :key="l" class="combo">
                  <i class="stroke"></i><select :aria-label="l"><option>ByLayer</option></select><i class="arr wide"></i>
                </div>
              </div>
            </div>
            <footer>Properties<i class="arr wide"></i><Launch /></footer>
          </section>

          <section class="panel groups">
            <div class="body">
              <button class="big"><Ic n="group" :s="32" /><span>Group</span></button>
              <div class="col mid"><Ic n="ungroup" /><Ic n="gedit" /><button class="lit" aria-label="Group selection"><Ic n="gsel" /></button></div>
            </div>
            <footer>Groups<i class="arr wide"></i></footer>
          </section>

          <section class="panel utils">
            <div class="body">
              <button class="big"><Ic n="measure" :s="32" /><span>Measure</span><i class="arr"></i></button>
              <div class="col mid"><Ic n="qsel" /><Ic n="idpoint" /><Ic n="calc" /></div>
            </div>
            <footer>Utilities<i class="arr wide"></i></footer>
          </section>

          <section class="panel clip">
            <div class="body">
              <button class="big"><Ic n="paste" :s="32" /><span>Paste</span><i class="arr"></i></button>
              <div class="col mid"><Ic n="cut" /><Ic n="copyclip" /></div>
            </div>
            <footer>Clipboard</footer>
          </section>

          <section class="panel view">
            <div class="body">
              <button class="big"><Ic n="base" :s="32" /><span>Base</span><i class="arr"></i></button>
            </div>
            <footer>View<i class="arr wide"></i><Launch /></footer>
          </section>
        </div>

        <div class="files">
          <button v-for="f in files" :key="f" class="file" :class="{ on: f === 'Drawing6*' }">
            {{ f }}<svg v-if="f === 'Drawing6*'" width="8" height="8"><path d="m1 1 6 6M7 1 1 7" stroke="#333" stroke-width="2" /></svg>
          </button>
          <button class="plus" aria-label="New drawing"><i></i></button>
        </div>

        <div class="toolrow">
          <div class="toolbar">
            <i class="grip"></i>
            <button v-for="n in ['new', 'open', 'saveas', 'pin', 'print']" :key="n" :aria-label="'Project ' + n">
              <Ic :n="n" /><Ic class="badge" n="cube" :s="10" />
            </button>
            <button aria-label="ProjectWise"><Ic n="cube" /></button>
          </div>
        </div>

        <main class="canvas">
          <div class="vp-label">[−][Top][2D Wireframe]</div>
          <div class="vp-ctl">
            <svg width="10" height="11"><path d="M0 7h10v3H0z" fill="#fff" /></svg>
            <svg width="10" height="11"><path d="M1 4h6v6H1z" fill="none" stroke="#fff" stroke-width="2" /><path d="M3 1.500h6.500V8" fill="none" stroke="#fff" /></svg>
            <svg width="10" height="11"><path d="m1 1.500 8 8M9 1.500l-8 8" stroke="#fff" stroke-width="2.500" /></svg>
          </div>

          <svg class="cube" width="132" height="148" viewBox="0 -10 132 148">
            <circle cx="66" cy="64" r="54" fill="none" stroke="#41474e" stroke-width="12" />
            <path d="M40 38h52v52H40z" fill="#adafb1" /><path d="M50 48h32v32H50z" fill="#9fa5a9" />
            <g fill="#b9bbbd" text-anchor="middle" font-family="Liberation Sans, Arial, sans-serif" font-size="22" font-weight="700">
              <text x="66" y="16">N</text><text x="66" y="128">S</text><text x="10" y="72">W</text><text x="122" y="72">E</text>
            </g>
            <text x="66" y="68" fill="#42494f" text-anchor="middle" font-family="Open Sans, sans-serif" font-size="11" font-weight="700">TOP</text>
          </svg>
          <button class="wcs">WCS <svg width="10" height="6"><path d="M1 .5h8L5 5z" fill="none" stroke="#b4b6c2" /></svg></button>

          <div class="navbar">
            <i class="dot"></i>
            <Ic n="steer" :s="22" /><i class="arr"></i>
            <Ic n="pan" :s="24" />
            <Ic n="zoomx" :s="24" /><i class="arr"></i>
            <Ic n="orbit" :s="24" /><i class="arr"></i>
            <Ic n="motion" :s="24" />
            <i class="dot"></i>
          </div>

          <svg class="ucs" width="84" height="74" viewBox="0 0 84 74" fill="none" stroke="#fff">
            <path d="M6.500 18v48.500H57M2.500 61.500h9v9h-9zM8 1l6.500 6.500L21 1M14.500 7.500V14M61 53l13 13M74 53 61 66" />
          </svg>

          <form class="dialog" @submit.prevent>
            <header>
              <span class="dlg-ico"><Ic n="acad" :s="12" /></span>Insert Layout(s)
              <button type="button" class="dlg-x" aria-label="Close">
                <svg width="11" height="9"><path d="m2 1 7 7M9 1 2 8" stroke="#55565f" stroke-width="4" /><path d="m2 1 7 7M9 1 2 8" stroke="#fff" stroke-width="2" /></svg>
              </button>
            </header>
            <div class="dlg-body">
              <div class="dlg-left">
                <label for="layouts">Layout name(s):</label>
                <select id="layouts" size="8" multiple>
                  <option v-for="(l, i) in layouts" :key="l" :class="{ cur: i === 0 }">{{ l }}</option>
                </select>
              </div>
              <div class="dlg-btns">
                <button class="ok">OK</button>
                <button type="button">Cancel</button>
              </div>
            </div>
          </form>
        </main>

        <div class="cmd">
          <div class="cmd-side">
            <i class="grip"></i>
            <svg width="10" height="10"><path d="m1 1 8 8M9 1 1 9" stroke="#fff" stroke-width="2" /></svg>
            <Ic n="wrench" :s="14" />
          </div>
          <div class="cmd-main">
            <div class="history">Unable to find the rules file: C:\C3DPipeRules.xml</div>
            <div class="prompt">
              <svg width="15" height="14"><path d="M.5.5h14v13H.5z" fill="#dde1e6" stroke="#8a919a" /><path d="m3 4 3 3-3 3M8 10.500h4" fill="none" stroke="#333" /></svg>
              <i class="arr"></i>
              <input type="text" aria-label="Command" placeholder="Type a command" />
            </div>
          </div>
        </div>

        <div class="bottom">
          <div class="layouts">
            <button class="lt on">Model</button>
            <button class="lt">Layout1</button>
            <button class="lt">Layout2</button>
            <button class="plus" aria-label="New layout"><i></i></button>
          </div>
          <div class="status">
            <button class="model">MODEL</button>
            <div class="g2"><Ic n="sgrid" class="glow" /><Ic n="ssnap" /><i class="arr mid-a"></i></div>
            <div class="g3"><Ic n="sortho" /><Ic n="spolar" /><i class="arr mid-a"></i><Ic n="siso" /><i class="arr mid-a"></i></div>
            <div class="g2"><Ic n="strack" /><Ic n="sosnap" class="glow" /><i class="arr mid-a"></i></div>
            <div class="g4"><Ic n="annv" class="glow" /><Ic n="anna" /><Ic n="ann" /><span>1:1</span><i class="arr mid-a"></i></div>
            <div class="g5"><Ic n="gear" /><i class="arr mid-a"></i></div>
            <div class="g1"><Ic n="plus" /></div>
            <div class="g1"><Ic n="perf" class="glow" /></div>
            <div class="g6"><Ic n="iso" /></div>
            <div class="g7"><Ic n="full" /><Ic n="burger" /></div>
          </div>
        </div>
      </div>
      <div class="behind"></div>
    </div>

    <div class="taskbar">
      <button class="orb" aria-label="Start"><Ic n="orb" :s="36" /></button>
      <button v-for="t in tasks" :key="t.n" class="task" :class="t.c" :aria-label="t.n">
        <span><Ic :n="t.n" :s="18" /></span>
      </button>
      <div class="tray">
        <span class="lang">ES</span>
        <i class="up"></i>
        <Ic n="speaker" /><Ic n="net" />
        <span class="clock">12:34 PM</span>
        <button class="peek" aria-label="Show desktop"></button>
      </div>
    </div>
  </div>
</template>

<script setup>
import { h } from 'vue'

const Ic = (p) =>
  h('svg', { class: 'ic', width: p.s || 16, height: p.s || 16 }, [h('use', { href: '#i-' + p.n })])
Ic.props = ['n', 's']

// small corner arrow that opens a panel's settings
const Launch = () =>
  h('svg', { class: 'launch', width: 6, height: 6 }, [
    h('path', { d: 'M0 .5h2M1 1l4 4M5.500 2v3.500H2', fill: 'none', stroke: '#ddd' }),
  ])

const quick = ['new', 'open', 'save', 'saveas', 'print']

const tabs = [
  'Home',
  'Insert',
  'Annotate',
  'Parametric',
  'View',
  'Manage',
  'Output',
  'Add-ins',
  'Autodesk 360',
  'Express Tools',
  'ProjectWise',
  'CDM Smith Tools',
  'CDM Smith Tools II',
]

const drawBig = [
  { n: 'line', t: 'Line' },
  { n: 'polyline', t: 'Polyline' },
  { n: 'circle', t: 'Circle', a: true },
  { n: 'arc', t: 'Arc', a: true },
]

const modify = [
  [{ n: 'move', t: 'Move' }, { n: 'copy', t: 'Copy' }, { n: 'stretch', t: 'Stretch' }],
  [{ n: 'rotate', t: 'Rotate' }, { n: 'mirror', t: 'Mirror' }, { n: 'scale', t: 'Scale' }],
  [
    { n: 'trim', t: 'Trim', a: true },
    { n: 'fillet', t: 'Fillet', a: true },
    { n: 'array', t: 'Array', a: true },
  ],
  [{ n: 'erase' }, { n: 'explode' }, { n: 'offset' }],
]

const files = ['M05040PDPL*', 'M05045PDSC*', 'FORMATO BASE*', 'Drawing6*']

const layouts = ['ACHURADOS', 'NÚMERO_PLANO', 'TABLOIDE']

const tasks = [
  { n: 'ie', c: 'run many' },
  { n: 'folder', c: 'run two' },
  { n: 'wmp', c: '' },
  { n: 'chrome', c: 'run' },
  { n: 'outlook', c: '' },
  { n: 'skype', c: 'run many' },
  { n: 'acrobat', c: 'run' },
  { n: 'cubes', c: 'run' },
  { n: 'acad', c: 'run many front' },
  { n: 'paint', c: 'run' },
]
</script>

<style>
body {
  margin: 0;
  background: #1d1f23;
}
</style>

<style scoped>
.desktop {
  height: 100vh;
  display: flex;
  flex-direction: column;
  overflow: hidden;
  background: #22252a;
  font-family: 'Open Sans', 'Noto Sans', sans-serif;
  font-size: 12px;
  line-height: 16px;
  color: #ddd;
}
.desktop * {
  box-sizing: border-box;
}
button,
select,
input {
  font: inherit;
  color: inherit;
  background: none;
  border: 0;
  padding: 0;
  margin: 0;
}
.sprite {
  position: absolute;
  width: 0;
  height: 0;
}
.ic {
  flex: none;
  display: block;
  fill: currentColor;
}
.screen {
  flex: 1;
  min-height: 0;
  display: flex;
  padding-top: 2px;
}
.app {
  flex: 1;
  min-width: 0;
  position: relative;
  display: flex;
  flex-direction: column;
  background: #5e5e5e;
  border-left: 1px solid #8a8a8a;
  border-bottom: 1px solid #2b2b2b;
}
.behind {
  width: 7px;
  border-left: 4px solid #23272f;
  background: linear-gradient(#b9cbe0 0 28px, #e4e4e4 28px 92px, #f4f4f4 92px 200px, #b5b5b5 200px 680px, #f0f0f0 680px);
}

/* arrows */
.arr {
  flex: none;
  width: 0;
  height: 0;
  border: 3px solid transparent;
  border-top-color: #e2e2e2;
  border-bottom: 0;
}
.arr.wide {
  border-width: 4px 4px 0;
}
.arr.mid-a {
  border-width: 5px 4px 0;
  border-top-color: #fff;
}
.arr.dark {
  border-top-color: #3a3f48;
}
.arr-right {
  border: 4px solid transparent;
  border-left-color: #fff;
  border-right: 0;
}

/* title bar */
.app-btn {
  position: absolute;
  left: 0;
  top: 3px;
  z-index: 2;
  width: 41px;
  height: 41px;
  display: flex;
  align-items: center;
  justify-content: center;
  gap: 3px;
  border: 1px solid #000;
  background: linear-gradient(#bdbdbd, #6c6c6c);
  box-shadow: inset 0 0 0 1px #b5b5b5;
}
.titlebar {
  height: 28px;
  display: flex;
  align-items: center;
  border-top: 1px solid #c4c4c4;
  border-bottom: 2px solid #2f2f2f;
  background: linear-gradient(#a0a0a0, #5a5a5a);
  color: #fff;
}
.qat {
  display: flex;
  align-items: center;
  gap: 8px;
  padding-left: 50px;
}
.qat .arr {
  margin-left: -3px;
}
.qat .bar {
  position: relative;
  margin: 4px 0 0;
}
.bar::before {
  content: '';
  position: absolute;
  left: -4px;
  top: -8px;
  width: 8px;
  height: 2px;
  background: #fff;
}
.caption {
  flex: 1;
  margin: 0;
  display: flex;
  justify-content: center;
  gap: 12px;
  font-size: 12px;
  font-weight: 400;
}
.info {
  display: flex;
  align-items: center;
  gap: 8px;
}
.search {
  width: 180px;
  height: 22px;
  margin-right: -4px;
  padding: 0 3px;
  border: 1px solid #333;
  background: #717171;
  font-size: 11px;
  font-style: italic;
}
.search::placeholder {
  color: #d2d2d2;
  opacity: 1;
}
.signin {
  width: 112px;
  display: flex;
  align-items: center;
  gap: 5px;
}
.signin .arr {
  margin-left: auto;
}
.rule {
  width: 1px;
  height: 18px;
  background: #8f8f8f;
}
.winctl {
  display: flex;
  gap: 8px;
  padding: 0 7px 0 20px;
}

/* ribbon tabs */
.tabs {
  height: 20px;
  display: flex;
  align-items: flex-end;
  margin-right: 3px;
  padding-left: 46px;
  border-bottom: 1px solid #333;
  background: #535353;
}
.tabs a {
  height: 18px;
  line-height: 16px;
  padding: 0 7px 0 8px;
  border: 1px solid transparent;
  border-bottom: 0;
  color: #e0e0e0;
  text-decoration: none;
  white-space: nowrap;
}
.tabs a.on {
  height: 19px;
  margin-bottom: -1px;
  border-color: #333;
  background: linear-gradient(#757575, #5e5e5e);
  color: #fff;
}
.collapse {
  width: 13px;
  height: 8px;
  margin: 0 6px 6px 22px;
  border-radius: 2px;
  background: #ccc;
}
.collapse i {
  display: block;
  margin: 0 auto;
  width: 0;
  border: 3px solid transparent;
  border-top: 0;
  border-bottom-color: #222;
}
.tabs > .arr {
  margin-bottom: 8px;
}

/* ribbon */
.ribbon {
  height: 99px;
  flex: none;
  display: flex;
  margin-right: 3px;
  padding: 0 0 2px 2px;
  background: linear-gradient(#4d4d4d, #393939);
  border-bottom: 1px solid #8f8f8f;
  box-shadow: inset 0 -1px 0 #2c2c2c;
}
.panel {
  flex: none;
  display: flex;
  flex-direction: column;
  border-right: 1px solid #454545;
  background: #5e5e5e;
  color: #7e7e7e;
}
.body {
  height: 79px;
  display: grid;
  padding: 4px 0 0;
}
.panel footer {
  position: relative;
  flex: 1;
  display: flex;
  align-items: center;
  justify-content: center;
  gap: 7px;
  background: linear-gradient(#4a4a4a, #505050);
  color: #fff;
}
.launch {
  position: absolute;
  right: 5px;
  top: 7px;
}
.draw {
  width: 224px;
}
.draw .body {
  grid-template-columns: 42px 46px 52px 42px 34px;
}
.modify {
  width: 250px;
}
.modify .body {
  padding-left: 6px;
  grid-template-columns: 72px 69px 66px 36px;
}
.modify .col:last-child .sm {
  justify-content: center;
}
.annot {
  width: 127px;
}
.annot .body {
  grid-template-columns: 50px 72px;
}
.layers {
  width: 273px;
}
.layers .body {
  grid-template-columns: 62px 208px;
}
.block {
  width: 161px;
}
.block .body {
  grid-template-columns: 45px 112px;
}
.props {
  width: 265px;
}
.props .body {
  grid-template-columns: 64px 18px 180px;
}
.groups {
  width: 69px;
}
.groups .body {
  grid-template-columns: 42px 24px;
}
.utils {
  width: 97px;
}
.utils .body {
  grid-template-columns: 70px 22px;
}
.clip {
  width: 80px;
}
.clip .body {
  grid-template-columns: 54px 22px;
}
.view {
  width: 62px;
}
.view footer {
  justify-content: flex-start;
  padding-left: 5px;
}
.big {
  display: flex;
  flex-direction: column;
  align-items: center;
  padding-top: 2px;
  line-height: 15px;
  white-space: nowrap;
}
.big span {
  margin-top: 5px;
}
.big .arr {
  margin-top: 2px;
}
.col {
  min-width: 0;
  display: grid;
  grid-template-rows: 24px 24px 24px;
  align-items: center;
  color: #7e7e7e;
}
.mid {
  justify-items: center;
}
.col .ic {
  color: #999;
}
.sm {
  height: 24px;
  display: flex;
  align-items: center;
  gap: 5px;
  white-space: nowrap;
}
.sm .arr {
  margin-left: auto;
  margin-right: 3px;
}
.icons {
  display: flex;
  align-items: center;
  gap: 8px;
  padding-left: 5px;
}
.lab {
  display: flex;
  align-items: center;
  gap: 5px;
}
.combo {
  height: 22px;
  display: flex;
  align-items: center;
  padding: 0 2px 0 4px;
  border: 1px solid #3f3f3f;
  background: linear-gradient(#5a5a5a, #6a6a6a);
  color: #a5a5a5;
}
.combo select {
  flex: 1;
  min-width: 0;
  appearance: none;
}
.layer-combo .ic {
  margin-right: 4px;
}
.layer-combo {
  color: #858585;
}
.swatch {
  width: 16px;
  height: 16px;
  margin: 0 10px 0 8px;
  background: #adadad;
}
.swatch.edge {
  width: 14px;
  height: 14px;
  margin: 0 5px 0 0;
  outline: 1px solid #333;
}
.stroke {
  width: 59px;
  height: 1px;
  margin: 0 2px 0 4px;
  background: #fff;
}
.off {
  color: #808080;
  border-color: #505050;
}
.off .arr {
  border-top-color: #8c8c8c;
}
.lit {
  width: 24px;
  height: 22px;
  display: grid;
  place-items: center;
  border: 1px solid #2f4568;
  background: linear-gradient(#6f88b4, #50668c);
}

/* drawing tabs */
.files {
  height: 25px;
  flex: none;
  display: flex;
  align-items: flex-end;
  margin-right: 3px;
  padding-left: 16px;
  background: #383838;
}
.file {
  display: flex;
  align-items: center;
  justify-content: space-between;
  min-width: 139px;
  height: 22px;
  margin-right: -16px;
  padding: 0 36px 0 16px;
  background: linear-gradient(#6a6a6a, #555);
  color: #b5b5b5;
  clip-path: polygon(
    0 100%, 4px 90%, 7px 65%, 9px 25%, 12px 5px, 16px 0,
    calc(100% - 22px) 0, calc(100% - 17px) 2px, calc(100% - 14px) 25%, calc(100% - 10px) 65%, calc(100% - 6px) 90%, 100% 100%
  );
}
.file.on {
  padding-right: 25px;
  background: linear-gradient(#8a8a8a, #5e5e5e);
  color: #fff;
}
.plus {
  width: 22px;
  height: 15px;
  display: grid;
  place-items: center;
  background: #555;
}
.plus i {
  width: 7px;
  height: 7px;
  background: linear-gradient(#ccc, #ccc) center / 7px 3px no-repeat, linear-gradient(#ccc, #ccc) center / 3px 7px no-repeat;
}
.files .plus {
  margin: 0 0 3px 12px;
  border-radius: 2px 10px 2px 10px;
}
.toolrow {
  height: 32px;
  flex: none;
  padding-top: 4px;
}
.toolbar {
  width: 147px;
  height: 24px;
  display: flex;
  align-items: center;
  gap: 7px;
  padding-left: 3px;
  border: 1px solid #3a3a3a;
}
.grip {
  width: 5px;
  height: 14px;
  margin-right: -4px;
  background: repeating-linear-gradient(#2e2e2e 0 1px, transparent 1px 2px);
}
.toolbar button {
  position: relative;
}
.badge {
  position: absolute;
  right: -1px;
  bottom: -1px;
}

/* drawing area */
.canvas {
  --minor: #262e37;
  --major: #303949;
  flex: 1;
  min-height: 0;
  position: relative;
  overflow: hidden;
  margin: 0 7px 0 1px;
  background:
    linear-gradient(90deg, var(--major) 1px, transparent 1px) 60px 5px / 71px 71px,
    linear-gradient(var(--major) 1px, transparent 1px) 60px 5px / 71px 71px,
    linear-gradient(90deg, transparent 14px, var(--minor) 14px 15px, transparent 15px 28px, var(--minor) 28px 29px, transparent 29px 43px, var(--minor) 43px 44px, transparent 44px 57px, var(--minor) 57px 58px, transparent 58px) 60px 5px / 71px 71px,
    linear-gradient(transparent 14px, var(--minor) 14px 15px, transparent 15px 28px, var(--minor) 28px 29px, transparent 29px 43px, var(--minor) 43px 44px, transparent 44px 57px, var(--minor) 57px 58px, transparent 58px) 60px 5px / 71px 71px,
    #212830;
}
.vp-label {
  padding: 6px 3px;
  color: #e8e8e8;
}
.vp-ctl {
  position: absolute;
  right: 11px;
  top: 10px;
  display: flex;
  gap: 10px;
}
.cube {
  position: absolute;
  right: 17px;
  top: 32px;
}
.wcs {
  position: absolute;
  right: 59px;
  top: 193px;
  width: 48px;
  height: 18px;
  display: flex;
  align-items: center;
  justify-content: space-around;
  border: 1px solid #b2b4c0;
  border-radius: 4px;
  background: #8e91a0;
  color: #4e515c;
  font: 10px 'Liberation Sans', Arial, sans-serif;
}
.navbar {
  position: absolute;
  right: 3px;
  top: 236px;
  width: 33px;
  height: 212px;
  display: flex;
  flex-direction: column;
  align-items: center;
  justify-content: space-between;
  padding: 2px 4px;
  border: 1px solid #6d7378;
  border-radius: 4px;
  background: #5a5f64;
  color: #3d4247;
}
.navbar .ic {
  fill: none;
  stroke: #3d4247;
}
.navbar .arr {
  border-top-color: #34393e;
}
.dot {
  align-self: flex-end;
  width: 7px;
  height: 7px;
  border: 2px solid #41464b;
  border-radius: 50%;
}
.ucs {
  position: absolute;
  left: 13px;
  bottom: 13px;
}

/* dialog */
.dialog {
  position: absolute;
  left: 806px;
  top: 197px;
  width: 294px;
  padding: 0 6px 7px;
  border: 1px solid #17202a;
  border-radius: 6px 6px 0 0;
  background: linear-gradient(#98b4d2 0, #b9d1ea 28px, #d8e5f3 119px, #b7cfe9 120px);
  box-shadow: inset 0 0 0 1px #6fd3ee;
  color: #111;
}
.dialog header {
  height: 29px;
  display: flex;
  align-items: center;
  gap: 4px;
  padding: 6px 2px 0;
}
.dlg-ico {
  width: 16px;
  height: 16px;
  display: grid;
  place-items: center;
  background: #f0e4e6;
}
.dlg-x {
  width: 31px;
  height: 17px;
  margin-left: auto;
  display: grid;
  place-items: center;
  border: 1px solid #4c1c1c;
  border-radius: 2px;
  background: linear-gradient(#dc9a90 50%, #bf3f30 50%, #cf6a55);
  box-shadow: inset 0 0 0 1px #e8b8b0;
}
.dlg-body {
  height: 206px;
  display: flex;
  justify-content: space-between;
  padding: 10px 11px 0 12px;
  background: #f0f0f0;
  font: 12px/16px Roboto, 'Liberation Sans', sans-serif;
}
.dlg-left {
  display: flex;
  flex-direction: column;
  gap: 13px;
}
#layouts {
  width: 177px;
  height: 146px;
  padding: 3px 5px;
  border: 1px solid #828790;
  border-radius: 0;
  background: #fff;
  overflow: hidden;
  outline: 0;
}
#layouts option {
  width: fit-content;
  min-height: 17px;
  line-height: 17px;
  padding: 0 2px;
}
#layouts .cur {
  padding-right: 6px;
  background: #f0f0f0;
}
.dlg-btns {
  display: flex;
  flex-direction: column;
  gap: 7px;
  padding-top: 2px;
}
.dlg-btns button {
  width: 73px;
  height: 21px;
  border: 1px solid #707070;
  border-radius: 3px;
  background: linear-gradient(#f2f2f2 50%, #dcdcdc 50%, #cfcfcf);
}
.dlg-btns .ok {
  border-color: #3c7fb1;
  background: linear-gradient(#e6f3f9 50%, #cde3ee 50%, #b9dcec);
  box-shadow: inset 0 0 0 1px #46c5ee;
}

/* command line */
.cmd {
  flex: none;
  display: flex;
  height: 52px;
  margin: 3px 4px 0 1px;
}
.cmd-side {
  width: 22px;
  display: flex;
  flex-direction: column;
  align-items: center;
  gap: 6px;
  padding: 4px 0 1px;
  background: linear-gradient(#777, #333);
}
.cmd-side .grip {
  width: 17px;
  height: 6px;
  margin: 0;
  background: repeating-linear-gradient(90deg, #aaa 0 2px, transparent 2px 3px);
}
.cmd-side .ic {
  margin-top: auto;
}
.cmd-main {
  flex: 1;
  display: flex;
  flex-direction: column;
  font-family: 'DejaVu Sans Mono', 'Liberation Mono', monospace;
}
.history {
  height: 29px;
  padding: 11px 2px 0;
  border-bottom: 1px solid #777;
  background: #c8c8c8;
  color: #111;
}
.prompt {
  flex: 1;
  display: flex;
  align-items: center;
  gap: 4px;
  padding-left: 5px;
  border-bottom: 1px solid #777;
  background: #fff;
}
.prompt .arr {
  border-top-color: #777;
}
.prompt input {
  flex: 1;
  padding-left: 3px;
  font-style: italic;
}
.prompt input::placeholder {
  color: #8a8a8a;
  opacity: 1;
}

/* layout tabs and status bar */
.bottom {
  flex: none;
  height: 32px;
  display: flex;
  justify-content: space-between;
  margin-right: 2px;
  border-bottom: 3px solid #5e5e5e;
  background: #383838;
}
.layouts {
  display: flex;
  padding-left: 11px;
}
.lt {
  height: 17px;
  min-width: 67px;
  margin-right: -2px;
  padding: 0 10px;
  background: linear-gradient(#4a4a4a, #626262);
  color: #aaa;
  clip-path: polygon(0 0, 100% 0, calc(100% - 4px) 30%, calc(100% - 7px) 80%, calc(100% - 12px) 100%, 12px 100%, 7px 80%, 4px 30%);
}
.lt.on {
  min-width: 58px;
  background: linear-gradient(#5e5e5e, #8a8a8a);
  color: #fff;
  font-weight: 700;
}
.layouts .plus {
  margin-left: 5px;
  border-radius: 10px 2px 10px 2px;
}
.status {
  display: flex;
  gap: 1px;
  height: 27px;
  color: #c8c8c8;
}
.status > * {
  display: flex;
  align-items: center;
  justify-content: space-evenly;
  border: 1px solid #757575;
  background: #4c4c4c;
}
.status span,
.model {
  color: #fff;
}
.model {
  width: 49px;
}
.g1 {
  width: 26px;
}
.g2 {
  width: 65px;
}
.g3 {
  width: 103px;
}
.g4 {
  width: 111px;
}
.g5 {
  width: 41px;
}
.g6 {
  width: 33px;
}
.g7 {
  width: 50px;
}
.glow {
  color: #2f8dff;
  filter: drop-shadow(0 0 2px #0a5fd0);
}

/* taskbar */
.taskbar {
  flex: none;
  position: relative;
  height: 30px;
  display: flex;
  align-items: stretch;
  gap: 3px;
  border-top: 1px solid #d5e2f0;
  background: linear-gradient(90deg, #8c9bb4 0, #8c9bb4 30px, #a8c1de 60px, #a8c1de calc(100% - 230px), #8395b0 calc(100% - 200px));
}
.orb {
  width: 51px;
  padding-left: 4px;
  margin-top: -6px;
}
.task {
  width: 43px;
  padding-bottom: 1px;
}
.task span {
  height: 100%;
  display: grid;
  place-items: center;
  border: 1px solid transparent;
}
.run span {
  border-color: #56677f;
  border-radius: 3px;
  background: linear-gradient(135deg, #dfe8f2, #a9bfd9 60%, #bccfe4);
  box-shadow: inset 0 0 0 1px #eef4fa;
}
.many span {
  margin-right: 8px;
  box-shadow: inset 0 0 0 1px #eef4fa, 3px 0 0 -1px #c9d8e9, 4px 0 0 -1px #56677f, 7px 0 0 -1px #c9d8e9, 8px 0 0 -1px #56677f;
}
.two span {
  margin-right: 4px;
  box-shadow: inset 0 0 0 1px #eef4fa, 4px 0 0 -1px #c9d8e9, 5px 0 0 -1px #56677f;
}
.front span {
  background: linear-gradient(#fff, #e3e9f1);
}
.tray {
  margin-left: auto;
  display: flex;
  align-items: center;
  gap: 11px;
  color: #fff;
}
.lang {
  margin: 0 4px 6px 0;
}
.up {
  border: 4px solid transparent;
  border-top: 0;
  border-bottom-color: #fff;
}
.clock {
  margin-left: 4px;
}
.peek {
  align-self: stretch;
  width: 14px;
  margin-right: 5px;
  border: 1px solid #444f60;
  background: linear-gradient(90deg, #5c6c84, #8d9cb2);
}
</style>
